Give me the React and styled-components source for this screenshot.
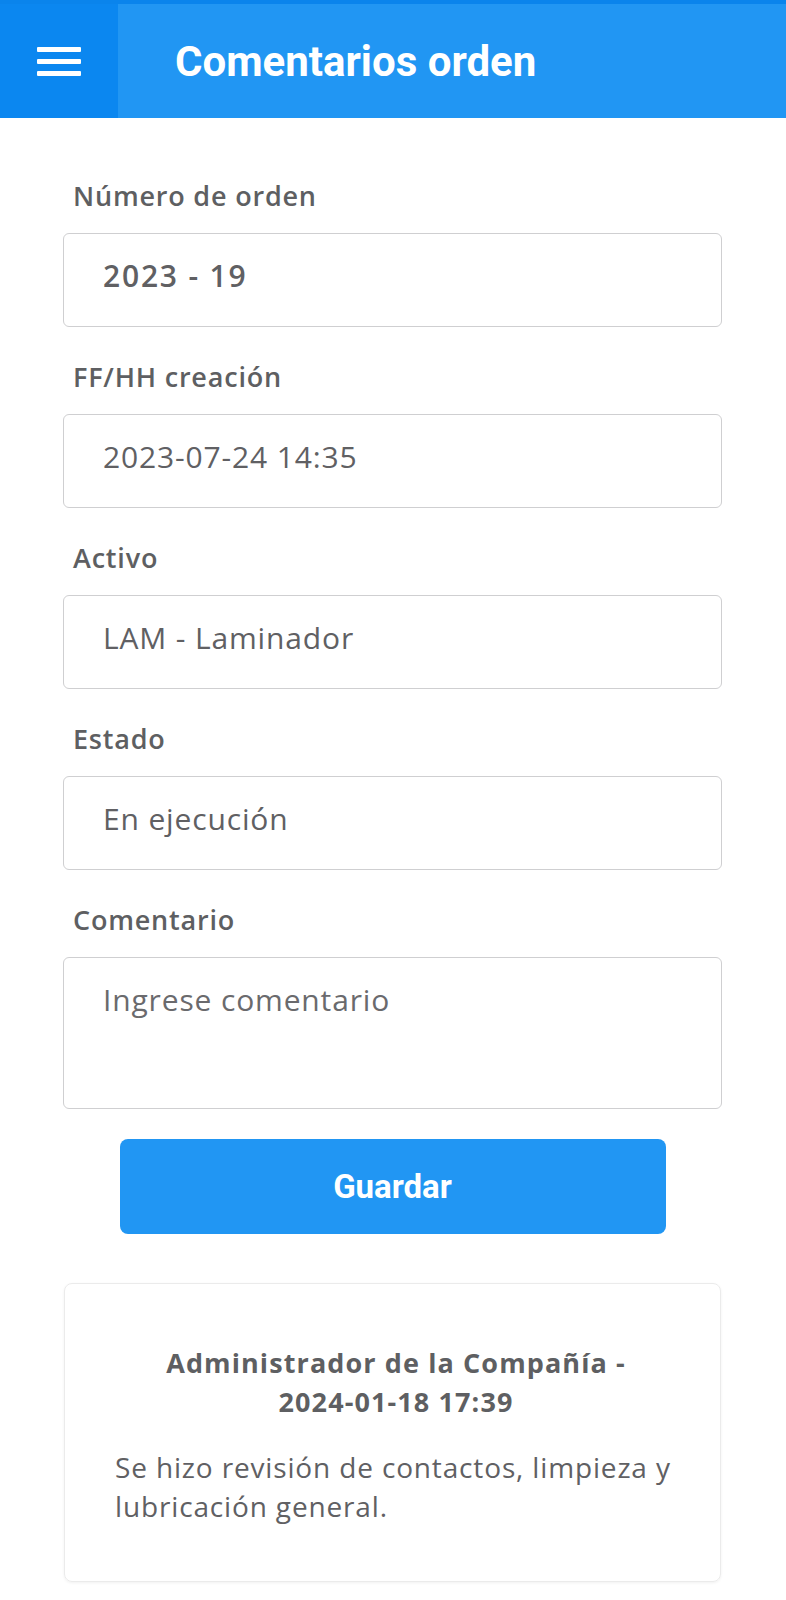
import React from "react";
import styled, { createGlobalStyle } from "styled-components";

const Global = createGlobalStyle`
  html, body { margin: 0; padding: 0; background: #ffffff; }
  body { font-family: "Open Sans", "Noto Sans", sans-serif; }
  * { box-sizing: border-box; }
`;

const Page = styled.div`
  width: 786px;
  min-height: 1600px;
  background: #ffffff;
`;

const Header = styled.header`
  display: flex;
  height: 118px;
  border-top: 4px solid #0a84ec;
  background: #2196f3;
`;

const MenuButton = styled.button`
  width: 118px;
  height: 100%;
  border: none;
  padding: 0;
  background: #0b87f0;
  display: flex;
  flex-direction: column;
  align-items: center;
  justify-content: center;
  gap: 7px;
  cursor: pointer;
`;

const MenuLine = styled.span`
  display: block;
  width: 44px;
  height: 5px;
  background: #ffffff;
  border-radius: 1px;
`;

const Title = styled.h1`
  margin: 0;
  padding-left: 57px;
  display: flex;
  align-items: center;
  font-family: Roboto, "Liberation Sans", sans-serif;
  font-weight: 700;
  font-size: 42px;
  color: #ffffff;
`;

const Form = styled.main`
  display: flex;
  flex-direction: column;
  padding: 60px 64px 18px 63px;
`;

const Field = styled.div`
  display: flex;
  flex-direction: column;
  margin-bottom: 32px;
  &:last-of-type { margin-bottom: 0; }
`;

const Label = styled.label`
  padding-left: 10px;
  margin-bottom: 19px;
  font-size: 27px;
  line-height: 36px;
  font-weight: 600;
  color: #5e5f62;
  letter-spacing: 0.8px;
`;

const Box = styled.div`
  height: ${(p) => p.$h || 94}px;
  border: 1px solid #cfcfd1;
  border-radius: 6px;
  padding: 22px 20px 0 39px;
  font-size: 30px;
  line-height: 40px;
  letter-spacing: ${(p) => (p.$bold ? "1.8px" : "0.85px")};
  font-weight: ${(p) => (p.$bold ? 600 : 400)};
  color: ${(p) => (p.$placeholder ? "#6a6a6d" : "#606063")};
  background: #ffffff;
`;

const SaveButton = styled.button`
  align-self: center;
  margin-top: 30px;
  width: 546px;
  height: 95px;
  border: none;
  border-radius: 8px;
  background: #2196f3;
  color: #ffffff;
  font-family: Roboto, "Liberation Sans", sans-serif;
  font-weight: 700;
  font-size: 33px;
  cursor: pointer;
`;

const Card = styled.section`
  margin: 49px 1px 0 1px;
  border: 1px solid #ebebeb;
  border-radius: 8px;
  box-shadow: 0 1px 3px rgba(0, 0, 0, 0.06);
  padding: 59px 43px 55px 50px;
`;

const CardTitle = styled.h2`
  margin: 0 0 27px 0;
  text-align: center;
  font-size: 27px;
  line-height: 39px;
  font-weight: 700;
  color: #5e5f62;
  letter-spacing: 1.1px;
`;

const NoWrap = styled.span`
  white-space: nowrap;
`;

const CardBody = styled.p`
  margin: 0;
  font-size: 28px;
  line-height: 39px;
  font-weight: 400;
  color: #606063;
  letter-spacing: 0.85px;
`;

const fields = [
  { label: "Número de orden", value: "2023 - 19", bold: true },
  { label: "FF/HH creación", value: "2023-07-24 14:35" },
  { label: "Activo", value: "LAM - Laminador" },
  { label: "Estado", value: "En ejecución" },
  { label: "Comentario", value: "Ingrese comentario", placeholder: true, h: 152 },
];

export default function App() {
  return (
    <Page>
      <Global />
      <Header>
        <MenuButton aria-label="menu">
          <MenuLine />
          <MenuLine />
          <MenuLine />
        </MenuButton>
        <Title>Comentarios orden</Title>
      </Header>
      <Form>
        {fields.map((f) => (
          <Field key={f.label}>
            <Label>{f.label}</Label>
            <Box $bold={f.bold} $placeholder={f.placeholder} $h={f.h}>
              {f.value}
            </Box>
          </Field>
        ))}
        <SaveButton>Guardar</SaveButton>
        <Card>
          <CardTitle>
            Administrador de la Compañía - <NoWrap>2024-01-18 17:39</NoWrap>
          </CardTitle>
          <CardBody>
            Se hizo revisión de contactos, limpieza y lubricación general.
          </CardBody>
        </Card>
      </Form>
    </Page>
  );
}
